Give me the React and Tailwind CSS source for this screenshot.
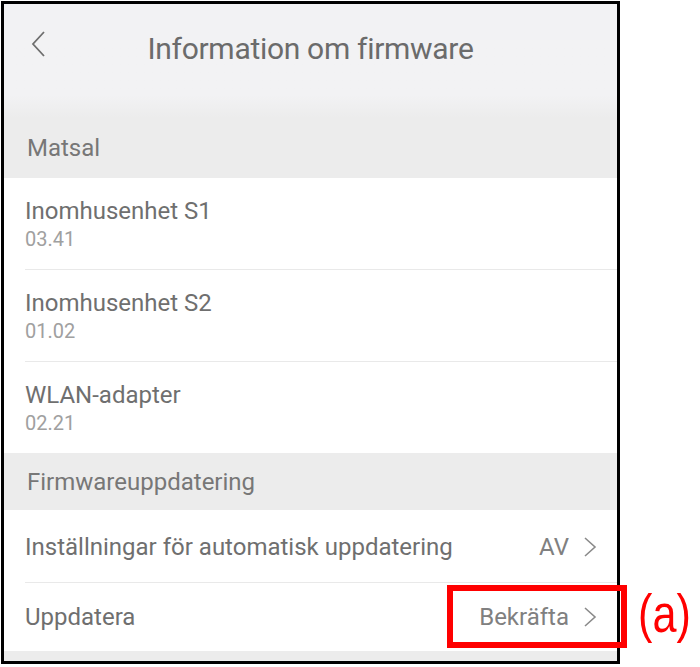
import React from "react";

const Chevron = () => (
  <svg width="14" height="22" viewBox="0 0 14 22" className="ml-[14px]">
    <path d="M2 2 L12 11 L2 20" fill="none" stroke="#8a8a8a" strokeWidth="1.6" />
  </svg>
);

function DeviceRow({ title, version, divider, h }) {
  return (
    <div className={`${h} flex flex-col justify-center pl-[21px] relative bg-white`}>
      <div className="text-[24px] leading-[28px] text-[#6f6f6f]">{title}</div>
      <div className="text-[20px] leading-[24px] text-[#a0a0a0] mt-[2px]">{version}</div>
      {divider && <div className="absolute left-[21px] right-0 bottom-0 h-px bg-[#e9e9e9]" />}
    </div>
  );
}

export default function App() {
  return (
    <div className="w-[700px] h-[667px] bg-white relative" style={{ fontFamily: "Roboto, 'Noto Sans', sans-serif" }}>
      <div className="absolute left-[1px] top-[1px] w-[619px] h-[663px] border-[3px] border-black flex flex-col overflow-hidden">
        <div className="h-[114px] bg-gradient-to-b from-[#f2f2f4] from-80% to-[#ececec] relative flex flex-col">
          <div className="h-[88px] flex items-center justify-center">
            <div className="text-[30px] text-[#6b6b6b] tracking-[-0.3px]">Information om firmware</div>
          </div>
          <svg width="16" height="28" viewBox="0 0 16 28" className="absolute left-[26px] top-[26px]">
            <path d="M14 2 L3 14 L14 26" fill="none" stroke="#6e6e6e" strokeWidth="1.8" />
          </svg>
        </div>
        <div className="h-[60px] bg-[#ececec] flex items-center pl-[23px] text-[24px] text-[#777777]">Matsal</div>
        <DeviceRow h="h-[92px]" title="Inomhusenhet S1" version="03.41" divider />
        <DeviceRow h="h-[92px]" title="Inomhusenhet S2" version="01.02" divider />
        <DeviceRow h="h-[91px]" title="WLAN-adapter" version="02.21" />
        <div className="h-[57px] bg-[#ececec] flex items-center pl-[23px] text-[24px] text-[#777777]">Firmwareuppdatering</div>
        <div className="h-[73px] bg-white flex items-center justify-between pl-[21px] pr-[20px] relative">
          <div className="text-[24px] text-[#6f6f6f]">Inställningar för automatisk uppdatering</div>
          <div className="flex items-center text-[24px] text-[#808080]">AV<Chevron /></div>
          <div className="absolute left-[21px] right-0 bottom-0 h-px bg-[#e9e9e9]" />
        </div>
        <div className="h-[68px] bg-white flex items-center justify-between pl-[21px] pr-[20px]">
          <div className="text-[24px] text-[#6f6f6f]">Uppdatera</div>
          <div className="flex items-center text-[24px] text-[#808080]">Bekräfta<Chevron /></div>
        </div>
        <div className="flex-1 bg-[#ececec]" />
      </div>
      <div className="absolute left-[447px] top-[585px] w-[180px] h-[63px] border-[6px] border-[#ff0000]" />
      <div
        className="absolute left-[638px] top-[581px] text-[54px] leading-[64px] text-[#ff0000] scale-x-[0.8] origin-left"
        style={{ fontFamily: "'Liberation Sans', Arial, sans-serif" }}
      >
        (a)
      </div>
    </div>
  );
}
